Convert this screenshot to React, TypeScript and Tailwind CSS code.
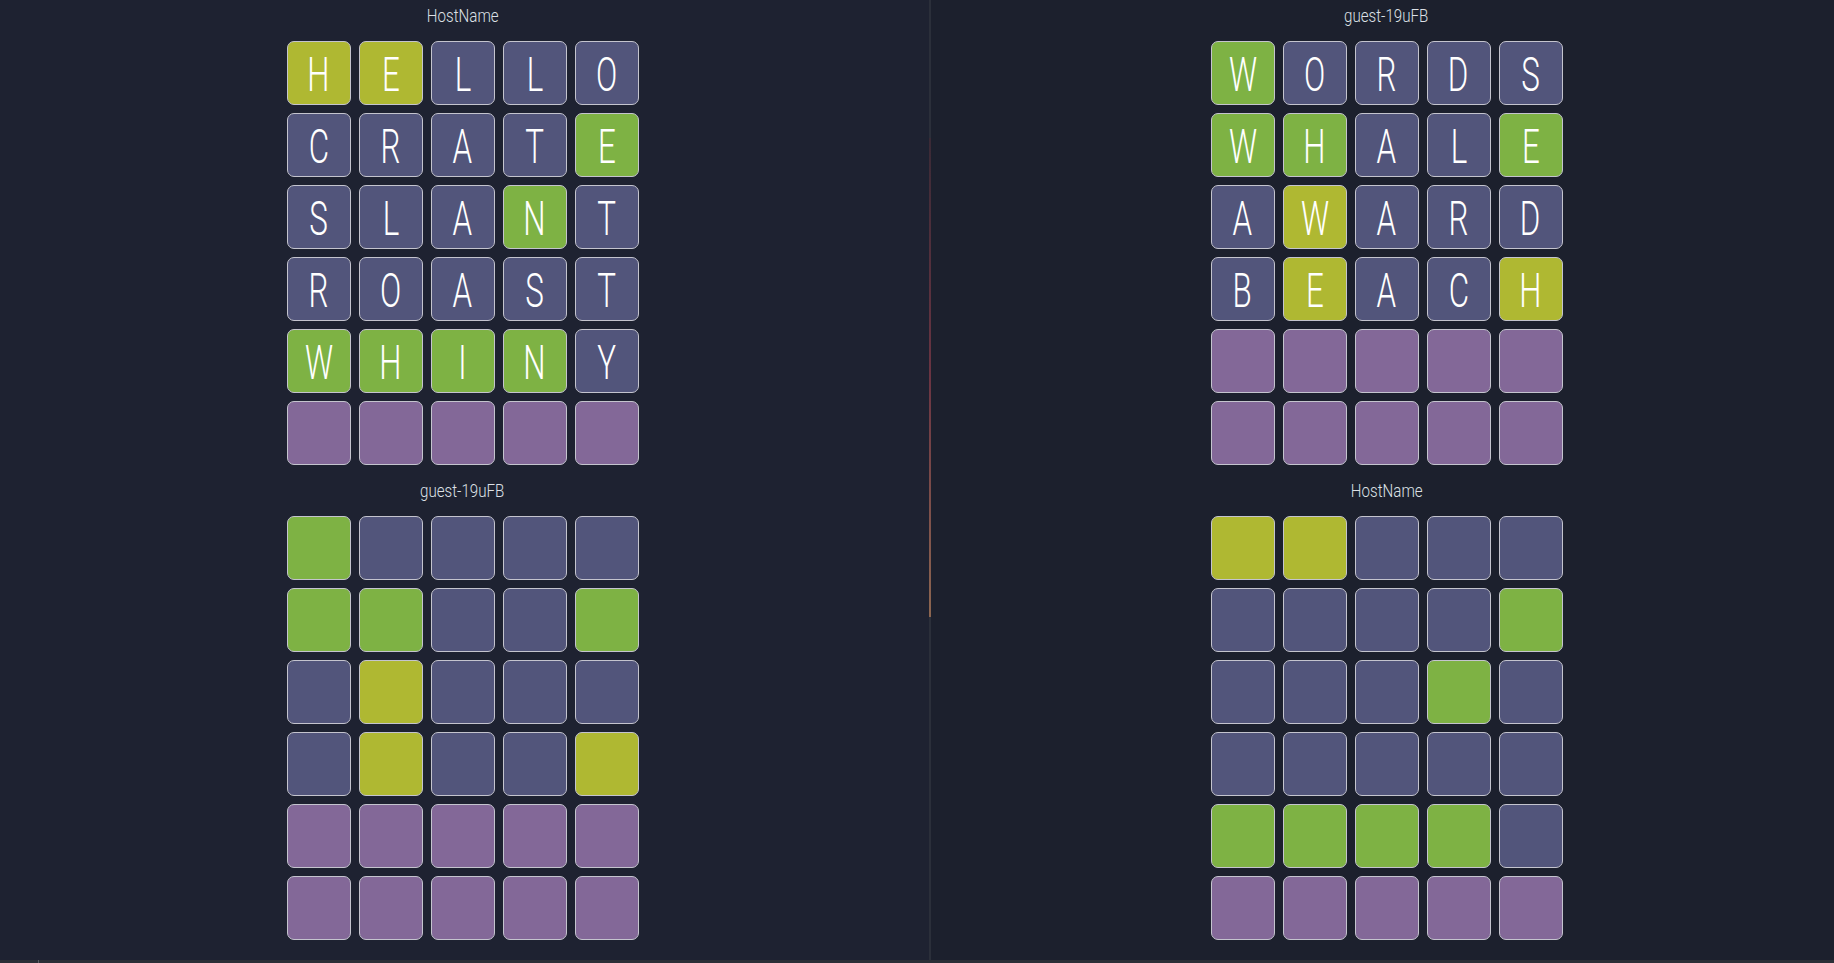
import React from "react";

type C = "Y" | "G" | "B" | "P";

const tileBg: Record<C, string> = {
  Y: "bg-[#afb832]",
  G: "bg-[#7eb244]",
  B: "bg-[#52557b]",
  P: "bg-[#836898]",
};

type Board = { name: string; words: string[]; colors: string[] };

const boardL1: Board = {
  name: "HostName",
  words: ["HELLO", "CRATE", "SLANT", "ROAST", "WHINY", "     "],
  colors: ["YYBBB", "BBBBG", "BBBGB", "BBBBB", "GGGGB", "PPPPP"],
};
const boardL2: Board = {
  name: "guest-19uFB",
  words: ["     ", "     ", "     ", "     ", "     ", "     "],
  colors: ["GBBBB", "GGBBG", "BYBBB", "BYBBY", "PPPPP", "PPPPP"],
};
const boardR1: Board = {
  name: "guest-19uFB",
  words: ["WORDS", "WHALE", "AWARD", "BEACH", "     ", "     "],
  colors: ["GBBBB", "GGBBG", "BYBBB", "BYBBY", "PPPPP", "PPPPP"],
};
const boardR2: Board = {
  name: "HostName",
  words: ["     ", "     ", "     ", "     ", "     ", "     "],
  colors: ["YYBBB", "BBBBG", "BBBGB", "BBBBB", "GGGGB", "PPPPP"],
};

function BoardView({ b }: { b: Board }) {
  return (
    <div className="flex flex-col items-center">
      <div
        className="h-[20px] leading-[20px] text-[18px] font-light text-[#dde0e6]"
        style={{ fontFamily: "Roboto, 'Noto Sans', sans-serif" }}
      >
        <span className="inline-block scale-x-[0.84]">{b.name}</span>
      </div>
      <div className="mt-[15px] grid grid-cols-5 gap-[8px]">
        {b.colors.map((row, r) =>
          row.split("").map((c, i) => (
            <div
              key={`${r}-${i}`}
              className={`w-[64px] h-[64px] rounded-[7px] border border-[#c4c4ce] flex items-center justify-center ${tileBg[c as C]}`}
            >
              <span
                className="inline-block scale-x-[0.64] text-[49px] leading-none font-light text-white pt-[2px]"
                style={{ fontFamily: "Roboto, 'Noto Sans', sans-serif" }}
              >
                {b.words[r][i] === " " ? "" : b.words[r][i]}
              </span>
            </div>
          ))
        )}
      </div>
    </div>
  );
}

export default function App() {
  return (
    <div className="w-[1834px] h-[963px] flex flex-col bg-[#1e2231] overflow-hidden">
      <div className="flex h-[960px]">
        <div className="w-[925px] flex flex-col items-center pt-[6px] gap-[16px]">
          <BoardView b={boardL1} />
          <BoardView b={boardL2} />
        </div>
        <div className="w-[2px] ml-[4px] flex flex-col bg-[#2b2f3a]">
          <div className="h-[138px]" />
          <div className="h-[479px] bg-gradient-to-b from-[#3a2a36] via-[#6a3442] to-[#8c6650]" />
        </div>
        <div className="flex-1 flex flex-col items-center pt-[6px] pl-[8px] gap-[16px] bg-[#1c202d]">
          <BoardView b={boardR1} />
          <BoardView b={boardR2} />
        </div>
      </div>
      <div className="h-[3px] bg-[#2b2f37] flex">
        <div className="w-[38px]" />
        <div className="w-[1px] bg-[#5a5e66]" />
      </div>
    </div>
  );
}
